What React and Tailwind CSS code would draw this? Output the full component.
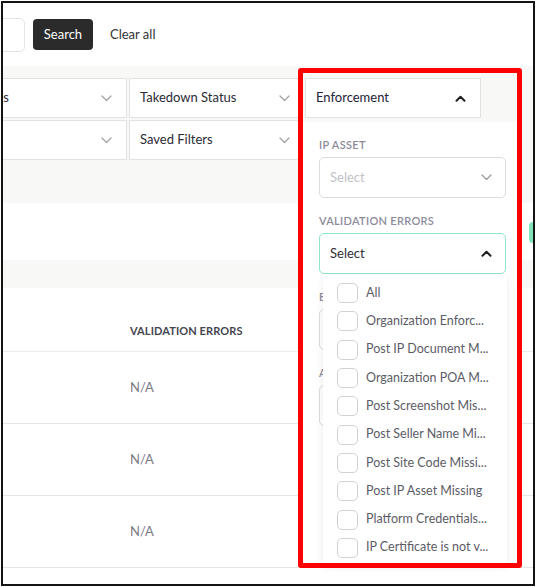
import React from "react";

const ChevronDown = ({ c = "#a3a3a3", w = 1.3 }) => (
  <svg width="11" height="7" viewBox="0 0 11 7" fill="none">
    <path d="M1 1l4.5 4.5L10 1" stroke={c} strokeWidth={w} strokeLinecap="round" strokeLinejoin="round" />
  </svg>
);

const ChevronUp = ({ c = "#1f1f1f", w = 2 }) => (
  <svg width="11" height="7" viewBox="0 0 11 7" fill="none">
    <path d="M1.5 5.8L5.5 1.8 9.5 5.8" stroke={c} strokeWidth={w} strokeLinecap="round" strokeLinejoin="round" />
  </svg>
);

const items = [
  "All",
  "Organization Enforc...",
  "Post IP Document M...",
  "Organization POA M...",
  "Post Screenshot Mis...",
  "Post Seller Name Mi...",
  "Post Site Code Missi...",
  "Post IP Asset Missing",
  "Platform Credentials...",
  "IP Certificate is not v...",
];

function Field({ label, children }) {
  return (
    <div className="flex flex-col">
      <div className="h-[14px] text-[11px] leading-[14px] font-semibold tracking-[0.3px] text-[#8d8b9b]">{label}</div>
      <div className="mt-[5px]">{children}</div>
    </div>
  );
}

export default function App() {
  return (
    <div className="w-[537px] h-[587px] bg-white p-[1px] font-['Lato',sans-serif]">
      <div className="relative w-[534px] h-[585px] border-2 border-[#141414] overflow-hidden bg-white">
        {/* top bar */}
        <div className="flex h-[63px] items-center">
          <div className="ml-[-100px] h-[34px] w-[122px] shrink-0 rounded-[5px] border border-[#e4e4e4] bg-white" />
          <button className="ml-[8px] h-[31px] w-[60px] shrink-0 rounded-[4px] bg-[#2b2b2b] text-[13px] text-white">
            Search
          </button>
          <span className="ml-[17px] text-[13px] text-[#333]">Clear all</span>
        </div>

        {/* filters band */}
        <div className="h-[137px] bg-[#f8f8f6] pt-[12px]">
          <div className="flex h-[40px]">
            <div className="ml-[-48px] flex w-[172px] shrink-0 items-center justify-between border border-[#e2e2e2] bg-white pl-[10px] pr-[14px] text-[13px] text-[#2b2b36]">
              <div className="flex w-[43px] justify-end overflow-visible">
                <span className="whitespace-nowrap">Platforms</span>
              </div>
              <ChevronDown />
            </div>
            <div className="ml-[2px] flex w-[174px] shrink-0 items-center justify-between border border-[#e2e2e2] bg-white pl-[10px] pr-[12px] text-[13px] text-[#2b2b36]">
              <span>Takedown Status</span>
              <ChevronDown />
            </div>
            <div className="ml-[2px] flex w-[176px] shrink-0 items-center justify-between border border-[#e2e2e2] bg-white pl-[10px] pr-[14px] text-[13px] text-[#23233a]">
              <span>Enforcement</span>
              <ChevronUp />
            </div>
          </div>
          <div className="mt-[2px] flex h-[40px]">
            <div className="ml-[-48px] flex w-[172px] shrink-0 items-center justify-end border border-[#e2e2e2] bg-white pr-[14px]">
              <ChevronDown />
            </div>
            <div className="ml-[2px] flex w-[174px] shrink-0 items-center justify-between border border-[#e2e2e2] bg-white pl-[10px] pr-[12px] text-[13px] text-[#2b2b36]">
              <span>Saved Filters</span>
              <ChevronDown />
            </div>
          </div>
        </div>

        {/* table */}
        <div className="h-[57px]" />
        <div className="h-[28px] bg-[#f8f8f6]" />
        <div className="h-[64px] border-b border-[#ebebeb] pl-[127px] pt-[36px] text-[11px] leading-[14px] font-bold tracking-[0.1px] text-[#454550]">
          VALIDATION ERRORS
        </div>
        {[0, 1, 2].map((i) => (
          <div key={i} className="flex h-[72px] items-center border-b border-[#e6e6e6] pl-[127px] text-[13px] text-[#7b7b85]">
            N/A
          </div>
        ))}

        {/* green pill at right edge */}
        <div className="absolute left-[526px] top-[219px] h-[21px] w-[12px] rounded-[4px] bg-[#7fe3b9]" />

        {/* dropdown panel */}
        <div className="absolute left-[300px] top-[119px] h-[444px] w-[215px] bg-white pl-[16px] pt-[16px]">
          <div className="flex w-[187px] flex-col gap-[16px]">
            <Field label="IP ASSET">
              <div className="flex h-[41px] items-center justify-between rounded-[5px] border border-[#dcdcdc] pl-[10px] pr-[13px] text-[13px] text-[#c2c2c8]">
                <span>Select</span>
                <ChevronDown c="#9a9a9a" />
              </div>
            </Field>
            <Field label="VALIDATION ERRORS">
              <div className="flex h-[41px] items-center justify-between rounded-[5px] border-[1.5px] border-[#8fe8c4] pl-[10px] pr-[13px] text-[13px] text-[#2e2e38]">
                <span>Select</span>
                <ChevronUp />
              </div>
            </Field>
            <Field label="ENFORCEMENT TYPE">
              <div className="h-[41px] rounded-[5px] border border-[#dcdcdc]" />
            </Field>
            <Field label="ASSIGNEE">
              <div className="h-[41px] rounded-[5px] border border-[#dcdcdc]" />
            </Field>
          </div>

          {/* options list */}
          <div className="absolute left-[20px] top-[153px] w-[184px] rounded-[4px] bg-white pt-[4px] pb-[3px] pl-[14px] shadow-[0_2px_8px_rgba(0,0,0,0.08)]">
            {items.map((t) => (
              <div key={t} className="flex h-[28.3px] items-center gap-[8px]">
                <div className="h-[20px] w-[21px] shrink-0 rounded-[5px] border-[1.5px] border-[#d2d2d6] bg-white" />
                <span className="whitespace-nowrap text-[12.5px] text-[#5c5c66]">{t}</span>
              </div>
            ))}
          </div>
        </div>

        {/* red annotation box */}
        <div className="pointer-events-none absolute left-[295px] top-[65px] h-[500px] w-[224px] rounded-[3px] border-[5px] border-[#ff0000]" />
      </div>
    </div>
  );
}
